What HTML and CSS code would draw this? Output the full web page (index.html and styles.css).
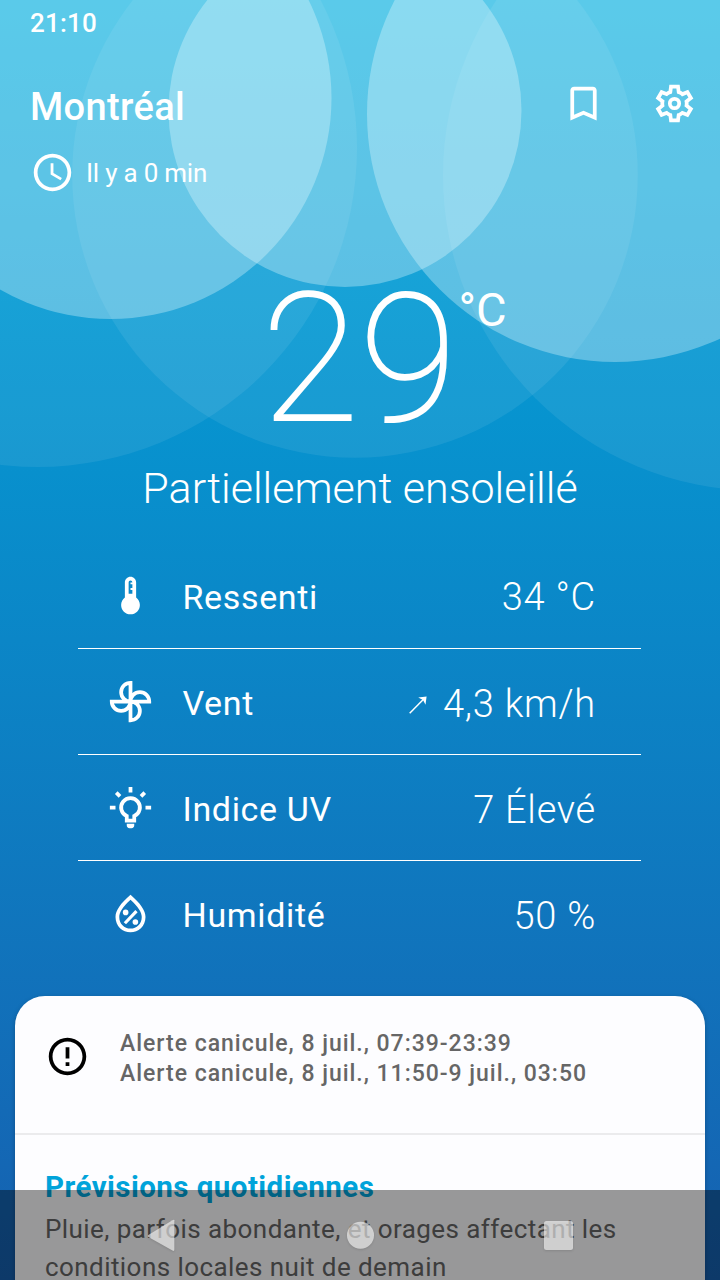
FILE: index.html
```html
<!DOCTYPE html>
<html lang="fr">
<head>
<meta charset="utf-8">
<title>Météo – Montréal</title>
<link rel="stylesheet" href="styles.css">
</head>
<body>
<div class="screen">
  <svg class="sky" viewBox="0 0 720 500" aria-hidden="true">
    <g class="haze">
      <circle cx="38" cy="148" r="319"/>
      <circle cx="355" cy="175" r="282.8"/>
      <circle cx="758" cy="175.5" r="315"/>
    </g>
    <g class="cloud">
      <circle cx="110.500" cy="98" r="221"/>
      <circle cx="345" cy="110.500" r="176.500"/>
      <circle cx="615" cy="114" r="248"/>
    </g>
  </svg>

  <div class="status">21:10</div>

  <header class="header">
    <h1 class="city">Montréal</h1>
    <div class="actions">
      <svg class="icon" viewBox="0 0 24 24"><path d="M17 3H7c-1.100 0-2 .9-2 2v16l7-3 7 3V5c0-1.100-.9-2-2-2zm0 15-5-2.180L7 18V5h10z"/></svg>
      <svg class="icon" viewBox="0 -960 960 960"><path fill-rule="evenodd" d="m370-80-16-128q-13-5-24.500-12T307-235l-119 50L78-375l103-78q-1-7-1-13.500v-27q0-6.500 1-13.500L78-585l110-190 119 50q11-8 23-15t24-12l16-128h220l16 128q13 5 24.500 12t22.500 15l119-50 110 190-103 78q1 7 1 13.500v27q0 6.500-2 13.500l103 78-110 190-118-50q-11 8-23 15t-24 12L590-80H370Zm70-80h79l14-106q31-8 57.500-23.500T639-327l99 41 39-68-86-65q5-14 7-29.500t2-31.500q0-16-2-31.500t-7-29.500l86-65-39-68-99 42q-22-23-48.500-38.500T533-694l-13-106h-79l-14 106q-31 8-57.500 23.500T321-633l-99-41-39 68 86 64q-5 15-7 30t-2 32q0 16 2 31t7 30l-86 65 39 68 99-42q22 23 48.500 38.500T427-266l13 106ZM480-340a140 140 0 1 0 0-280a140 140 0 1 0 0 280ZM480-420a60 60 0 1 1 0-120a60 60 0 1 1 0 120Z"/></svg>
    </div>
  </header>

  <div class="updated">
    <svg class="icon" viewBox="0 0 24 24"><path d="M11.990 2C6.470 2 2 6.480 2 12s4.470 10 9.990 10C17.520 22 22 17.520 22 12S17.520 2 11.990 2zM12 20c-4.420 0-8-3.580-8-8s3.580-8 8-8 8 3.580 8 8-3.580 8-8 8zm.5-13H11v6l5.250 3.150.750-1.230-4.500-2.670z"/></svg>
    <span class="updated-text">Il y a 0 min</span>
  </div>

  <div class="now">
    <span class="temp">29</span><span class="unit">°C</span>
  </div>
  <p class="condition">Partiellement ensoleillé</p>

  <ul class="details">
    <li class="row">
      <svg class="icon" viewBox="0 0 24 24"><path d="M15 13V5c0-1.660-1.340-3-3-3S9 3.340 9 5v8c-1.210.910-2 2.370-2 4 0 2.760 2.240 5 5 5s5-2.240 5-5c0-1.630-.790-3.090-2-4zm-4-8c0-.550.450-1 1-1s1 .450 1 1h-1v1h1v2h-1v1h1v2h-2V5z"/></svg>
      <span class="label">Ressenti</span><span class="value">34 °C</span>
    </li>
    <li class="row">
      <svg class="icon line-icon" viewBox="0 0 24 24"><path d="M12 12V2a5 5 0 0 0 0 10ZM12 12h10a5 5 0 0 0-10 0ZM12 12v10a5 5 0 0 0 0-10ZM12 12H2a5 5 0 0 0 10 0Z"/></svg>
      <span class="label">Vent</span>
      <svg class="arrow" viewBox="0 0 18 18"><path class="shaft" d="M.7 17.200 14.500 3.300"/><path d="M9.200 1.400 17.600.400 16.500 8.700 14 4Z"/></svg>
      <span class="value wind">4,3 km/h</span>
    </li>
    <li class="row">
      <svg class="icon line-icon" viewBox="0 0 24 24"><path d="M10 16.580A5 5 0 1 1 14 16.580V19H10ZM12 1v3M1 12h3M20 12h3M4.400 4.100l2 2M19.600 4.100l-2 2"/><path class="solid" d="M10 20.600h4V21.500a1.500 1.500 0 0 1-1.500 1.500h-1a1.500 1.500 0 0 1-1.500-1.500Z"/></svg>
      <span class="label">Indice UV</span><span class="value">7 Élevé</span>
    </li>
    <li class="row">
      <svg class="icon" viewBox="0 0 24 24"><path d="M12 2c-5.330 4.550-8 8.480-8 11.800 0 4.980 3.800 8.200 8 8.200s8-3.220 8-8.200c0-3.320-2.670-7.250-8-11.800zm0 18c-3.350 0-6-2.570-6-6.200 0-2.340 1.950-5.440 6-9.140 4.050 3.700 6 6.790 6 9.140 0 3.630-2.650 6.200-6 6.200z"/><circle cx="9.400" cy="11.400" r="1.500"/><circle cx="14.600" cy="16.500" r="1.500"/><path class="slash" d="M9 17.200 15.200 10.700"/></svg>
      <span class="label">Humidité</span><span class="value">50 %</span>
    </li>
  </ul>

  <main class="card">
    <section class="alerts">
      <svg class="icon alert-icon" viewBox="0 0 24 24"><path d="M11 15h2v2h-2zm0-8h2v6h-2zm.990-5C6.470 2 2 6.480 2 12s4.470 10 9.990 10C17.520 22 22 17.520 22 12S17.520 2 11.990 2zM12 20c-4.420 0-8-3.580-8-8s3.580-8 8-8 8 3.580 8 8-3.580 8-8 8z"/></svg>
      <div class="alert-text">
        <p class="alert-line">Alerte canicule, 8 juil., 07:39-23:39</p>
        <p class="alert-line">Alerte canicule, 8 juil., 11:50-9 juil., 03:50</p>
      </div>
    </section>
    <section class="forecast">
      <h2 class="forecast-title">Prévisions quotidiennes</h2>
      <p class="forecast-text">Pluie, parfois abondante, et orages affectant les<br>conditions locales nuit de demain</p>
    </section>
  </main>

  <nav class="navbar">
    <svg class="nav-icon" viewBox="0 0 40 40"><path d="M31.300 5.300V34.500Q31.300 36.600 29.500 35.600L5.400 21.900Q4 20.900 5.400 19.900L29.500 5.200Q31.300 4.200 31.300 5.300Z"/></svg>
    <svg class="nav-icon" viewBox="0 0 40 40"><circle cx="19.500" cy="20.300" r="13.500"/></svg>
    <svg class="nav-icon" viewBox="0 0 40 40"><rect x="5" y="6" width="29" height="29" rx="2.500"/></svg>
  </nav>
</div>
</body>
</html>
```
FILE: styles.css
```css
* { box-sizing: border-box; }

body {
  margin: 0;
  font-family: Roboto, "Liberation Sans", sans-serif;
}

h1, h2, p, ul { margin: 0; padding: 0; }

.screen {
  position: relative;
  width: 720px;
  height: 1280px;
  overflow: hidden;
  background: linear-gradient(#00acde, #1660b0);
  color: #fff;
  display: flex;
  flex-direction: column;
}

.screen > * { position: relative; flex-shrink: 0; }

.screen > .sky {
  position: absolute;
  top: 0;
  left: 0;
  width: 720px;
  height: 500px;
}
.haze { fill: rgba(255, 255, 255, 0.075); }
.cloud { fill: rgba(234, 252, 255, 0.335); }

.icon {
  width: 45px;
  height: 45px;
  fill: currentColor;
  flex: none;
}
.line-icon { fill: none; stroke: currentColor; stroke-width: 2; }
.line-icon .solid { fill: currentColor; stroke: none; }

.status {
  height: 46px;
  padding-left: 30px;
  font-size: 26px;
  font-weight: 500;
  line-height: 46px;
  letter-spacing: 0.2px;
}

.header {
  display: flex;
  justify-content: space-between;
  height: 98px;
  padding: 35px 23px 0 30px;
}
.city {
  font-size: 38px;
  font-weight: 500;
  line-height: 52px;
  letter-spacing: 0.350px;
}
.actions { display: flex; gap: 46px; }

.updated {
  display: flex;
  align-items: center;
  gap: 11px;
  height: 57px;
  padding-left: 30px;
}
.updated-text { font-size: 26px; line-height: 30px; letter-spacing: -0.220px; }

.now {
  display: flex;
  height: 254px;
  padding: 62px 0 0 261.500px;
}
.temp {
  width: 197px;
  font-size: 178px;
  font-weight: 100;
  line-height: 193px;
  letter-spacing: 0.5px;
  -webkit-text-stroke: 2px #fff;
}
.unit {
  padding-top: 20px;
  font-size: 47px;
  line-height: 54px;
}

.condition {
  height: 87px;
  text-align: center;
  font-size: 43px;
  font-weight: 300;
  line-height: 66px;
}

.details {
  width: 563px;
  margin-left: 78px;
  list-style: none;
}
.row {
  display: flex;
  align-items: center;
  height: 106px;
  padding: 0 45px 0 30px;
  border-bottom: 1px solid #fff;
}
.row:first-child { height: 107px; }
.row:last-child { border-bottom-color: transparent; }
.label {
  margin-left: 29.500px;
  padding-top: 3px;
  font-size: 34px;
  letter-spacing: 0.650px;
}
.value {
  margin-left: auto;
  padding-top: 4px;
  font-size: 38px;
  font-weight: 300;
  letter-spacing: 0.750px;
}
.arrow { width: 18px; height: 18px; margin: 7px 0 0 auto; fill: currentColor; }
.shaft { stroke: currentColor; stroke-width: 1.500; }
.slash { stroke: currentColor; stroke-width: 1.700; }
.value.wind { margin-left: 16px; }

.card {
  width: 690px;
  height: 330px;
  margin: 29px 15px 0;
  border-radius: 30px 30px 0 0;
  background: #fdfdff;
  box-shadow: 0 2px 5px rgba(0, 0, 0, 0.25);
}
.alerts {
  display: flex;
  height: 139px;
  padding: 33px 30px 0;
  border-bottom: 2px solid #ebebed;
}
.alert-icon { color: #000; margin-top: 5px; }
.alert-text { margin-left: 30px; }
.alert-line {
  color: #666;
  font-size: 23px;
  font-weight: 500;
  line-height: 30px;
  letter-spacing: 0.980px;
}
.forecast { padding: 32px 30px 0; }
.forecast-title {
  color: #00a3da;
  font-size: 29.500px;
  font-weight: 700;
  line-height: 40px;
  letter-spacing: 0.460px;
}
.forecast-text {
  padding-top: 3px;
  color: #666;
  font-size: 26px;
  line-height: 38px;
  letter-spacing: 0.430px;
}

.screen > .navbar {
  position: absolute;
  left: 0;
  right: 0;
  bottom: 0;
  display: flex;
  justify-content: center;
  gap: 158px;
  height: 90px;
  padding: 25px 0 0 1px;
  background: rgba(0, 0, 0, 0.4);
}
.nav-icon {
  width: 40px;
  height: 40px;
  overflow: visible;
  fill: rgba(255, 255, 255, 0.6);
  filter: drop-shadow(0 1px 1px rgba(0, 0, 0, 0.2));
}
```
